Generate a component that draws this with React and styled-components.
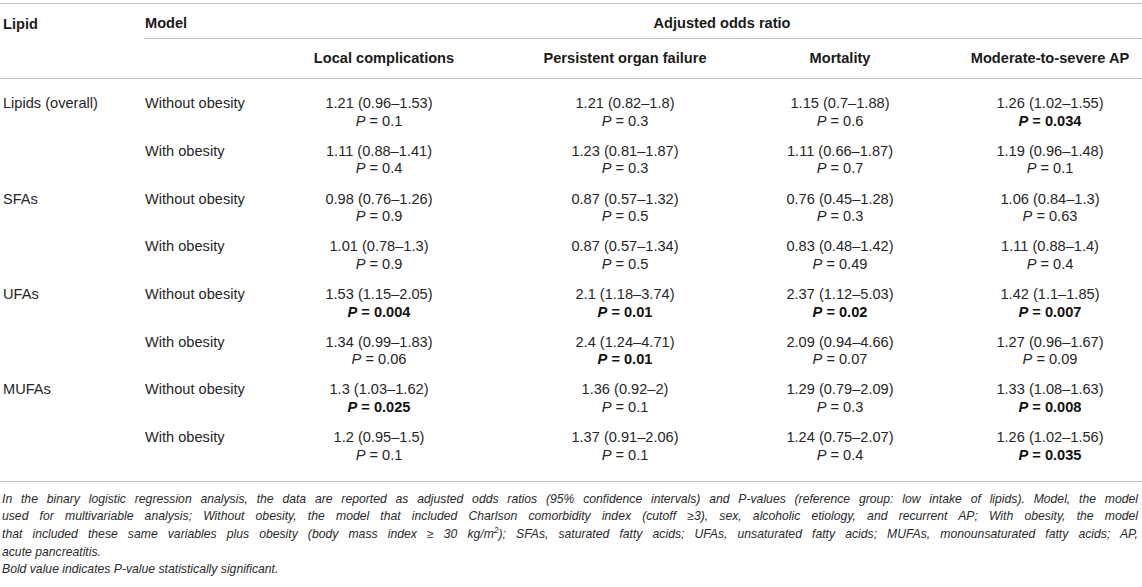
import React from 'react';
import styled, { createGlobalStyle } from 'styled-components';

const Global = createGlobalStyle`
    body {
        margin: 0;
        background: #fff;
        font-family: 'Liberation Sans', Arial, sans-serif;
        color: #262626;
    }
`

const COLS = '144px 148px 174px 318px 112px 62px 184px'

const Page = styled.div`
    width: 1142px;
    padding-top: 3px;
`

const Table = styled.div`
    border-top: 1px solid #c4c4c4;
    font-size: 14.6px;
`

const HeadTop = styled.div`
    display: grid;
    grid-template-columns: ${COLS};
    height: 35px;
    align-items: center;
`

const Spanner = styled.div`
    grid-column: 2 / -1;
    display: grid;
    grid-template-columns: 148px 1fr;
    align-items: center;
    height: 100%;
    padding-top: 4px;
    box-sizing: border-box;
    border-bottom: 1px solid #c4c4c4;
`

const HeadSub = styled.div`
    display: grid;
    grid-template-columns: ${COLS};
    height: 40px;
    padding-bottom: 2px;
    box-sizing: border-box;
    align-items: center;
    border-bottom: 1px solid #c4c4c4;
`

const Th = styled.div`
    font-weight: bold;
    color: #1a1a1a;
    padding-left: ${p => p.$pl || 0}px;
    padding-top: ${p => p.$pt || 0}px;
    text-align: ${p => p.$center ? 'center' : 'left'};
    grid-column: ${p => p.$col || 'auto'};
`

const Body = styled.div`
    padding: 10px 0 10px;
    border-bottom: 1px solid #c4c4c4;
`

const Row = styled.div`
    display: grid;
    grid-template-columns: ${COLS};
    padding: 6.3px 0 6.4px;
    line-height: 17.5px;
    align-items: start;
`

const Td = styled.div`
    padding-left: ${p => p.$pl || 0}px;
    text-align: ${p => p.$center ? 'center' : 'left'};
    grid-column: ${p => p.$col || 'auto'};
    white-space: nowrap;
`

const PLine = styled.div`
    font-weight: ${p => p.$sig ? 'bold' : 'normal'};
    color: ${p => p.$sig ? '#111' : 'inherit'};
    i { font-style: italic; }
`

const Notes = styled.div`
    padding-top: 9px;
    font-size: 12.2px;
    font-style: italic;
    line-height: 17.7px;
    padding-left: 2px;
    padding-right: 4px;
    color: #2a2a2a;
`

const JLine = styled.div`
    text-align: justify;
    text-align-last: justify;
    white-space: nowrap;
`

const NLine = styled.div`
    white-space: nowrap;
`

const Sup = styled.sup`
    font-size: 8.5px;
    line-height: 0;
`

const rows = [
    ['Lipids (overall)', 'Without obesity', ['1.21 (0.96–1.53)', '0.1'], ['1.21 (0.82–1.8)', '0.3'], ['1.15 (0.7–1.88)', '0.6'], ['1.26 (1.02–1.55)', '0.034', true]],
    ['', 'With obesity', ['1.11 (0.88–1.41)', '0.4'], ['1.23 (0.81–1.87)', '0.3'], ['1.11 (0.66–1.87)', '0.7'], ['1.19 (0.96–1.48)', '0.1']],
    ['SFAs', 'Without obesity', ['0.98 (0.76–1.26)', '0.9'], ['0.87 (0.57–1.32)', '0.5'], ['0.76 (0.45–1.28)', '0.3'], ['1.06 (0.84–1.3)', '0.63']],
    ['', 'With obesity', ['1.01 (0.78–1.3)', '0.9'], ['0.87 (0.57–1.34)', '0.5'], ['0.83 (0.48–1.42)', '0.49'], ['1.11 (0.88–1.4)', '0.4']],
    ['UFAs', 'Without obesity', ['1.53 (1.15–2.05)', '0.004', true], ['2.1 (1.18–3.74)', '0.01', true], ['2.37 (1.12–5.03)', '0.02', true], ['1.42 (1.1–1.85)', '0.007', true]],
    ['', 'With obesity', ['1.34 (0.99–1.83)', '0.06'], ['2.4 (1.24–4.71)', '0.01', true], ['2.09 (0.94–4.66)', '0.07'], ['1.27 (0.96–1.67)', '0.09']],
    ['MUFAs', 'Without obesity', ['1.3 (1.03–1.62)', '0.025', true], ['1.36 (0.92–2)', '0.1'], ['1.29 (0.79–2.09)', '0.3'], ['1.33 (1.08–1.63)', '0.008', true]],
    ['', 'With obesity', ['1.2 (0.95–1.5)', '0.1'], ['1.37 (0.91–2.06)', '0.1'], ['1.24 (0.75–2.07)', '0.4'], ['1.26 (1.02–1.56)', '0.035', true]],
]

const dataCols = [3, 4, 5, 7]

function Cell({ value, col }) {
    const [or, p, sig] = value
    return (
        <Td $center $col={col}>
            <div>{or}</div>
            <PLine $sig={sig}><i>P</i> = {p}</PLine>
        </Td>
    )
}

export default function App() {
    return (
        <Page>
            <Global />
            <Table>
                <HeadTop>
                    <Th $pl={3} $pt={4}>Lipid</Th>
                    <Spanner>
                        <Th $pl={1}>Model</Th>
                        <Th $center $pl={10}>Adjusted odds ratio</Th>
                    </Spanner>
                </HeadTop>
                <HeadSub>
                    <Th $center $col={3} $pl={10}>Local complications</Th>
                    <Th $center $col={4}>Persistent organ failure</Th>
                    <Th $center $col={5}>Mortality</Th>
                    <Th $center $col={7}>Moderate-to-severe AP</Th>
                </HeadSub>
                <Body>
                    {rows.map((r, i) => (
                        <Row key={i}>
                            <Td $pl={3}>{r[0]}</Td>
                            <Td $pl={1}>{r[1]}</Td>
                            {r.slice(2).map((v, j) => (
                                <Cell key={j} value={v} col={dataCols[j]} />
                            ))}
                        </Row>
                    ))}
                </Body>
            </Table>
            <Notes>
                <JLine>In the binary logistic regression analysis, the data are reported as adjusted odds ratios (95% confidence intervals) and P-values (reference group: low intake of lipids). Model, the model</JLine>
                <JLine>used for multivariable analysis; Without obesity, the model that included Charlson comorbidity index (cutoff ≥3), sex, alcoholic etiology, and recurrent AP; With obesity, the model</JLine>
                <JLine>that included these same variables plus obesity (body mass index ≥ 30 kg/m<Sup>2</Sup>); SFAs, saturated fatty acids; UFAs, unsaturated fatty acids; MUFAs, monounsaturated fatty acids; AP,</JLine>
                <NLine>acute pancreatitis.</NLine>
                <NLine>Bold value indicates P-value statistically significant.</NLine>
            </Notes>
        </Page>
    )
}
